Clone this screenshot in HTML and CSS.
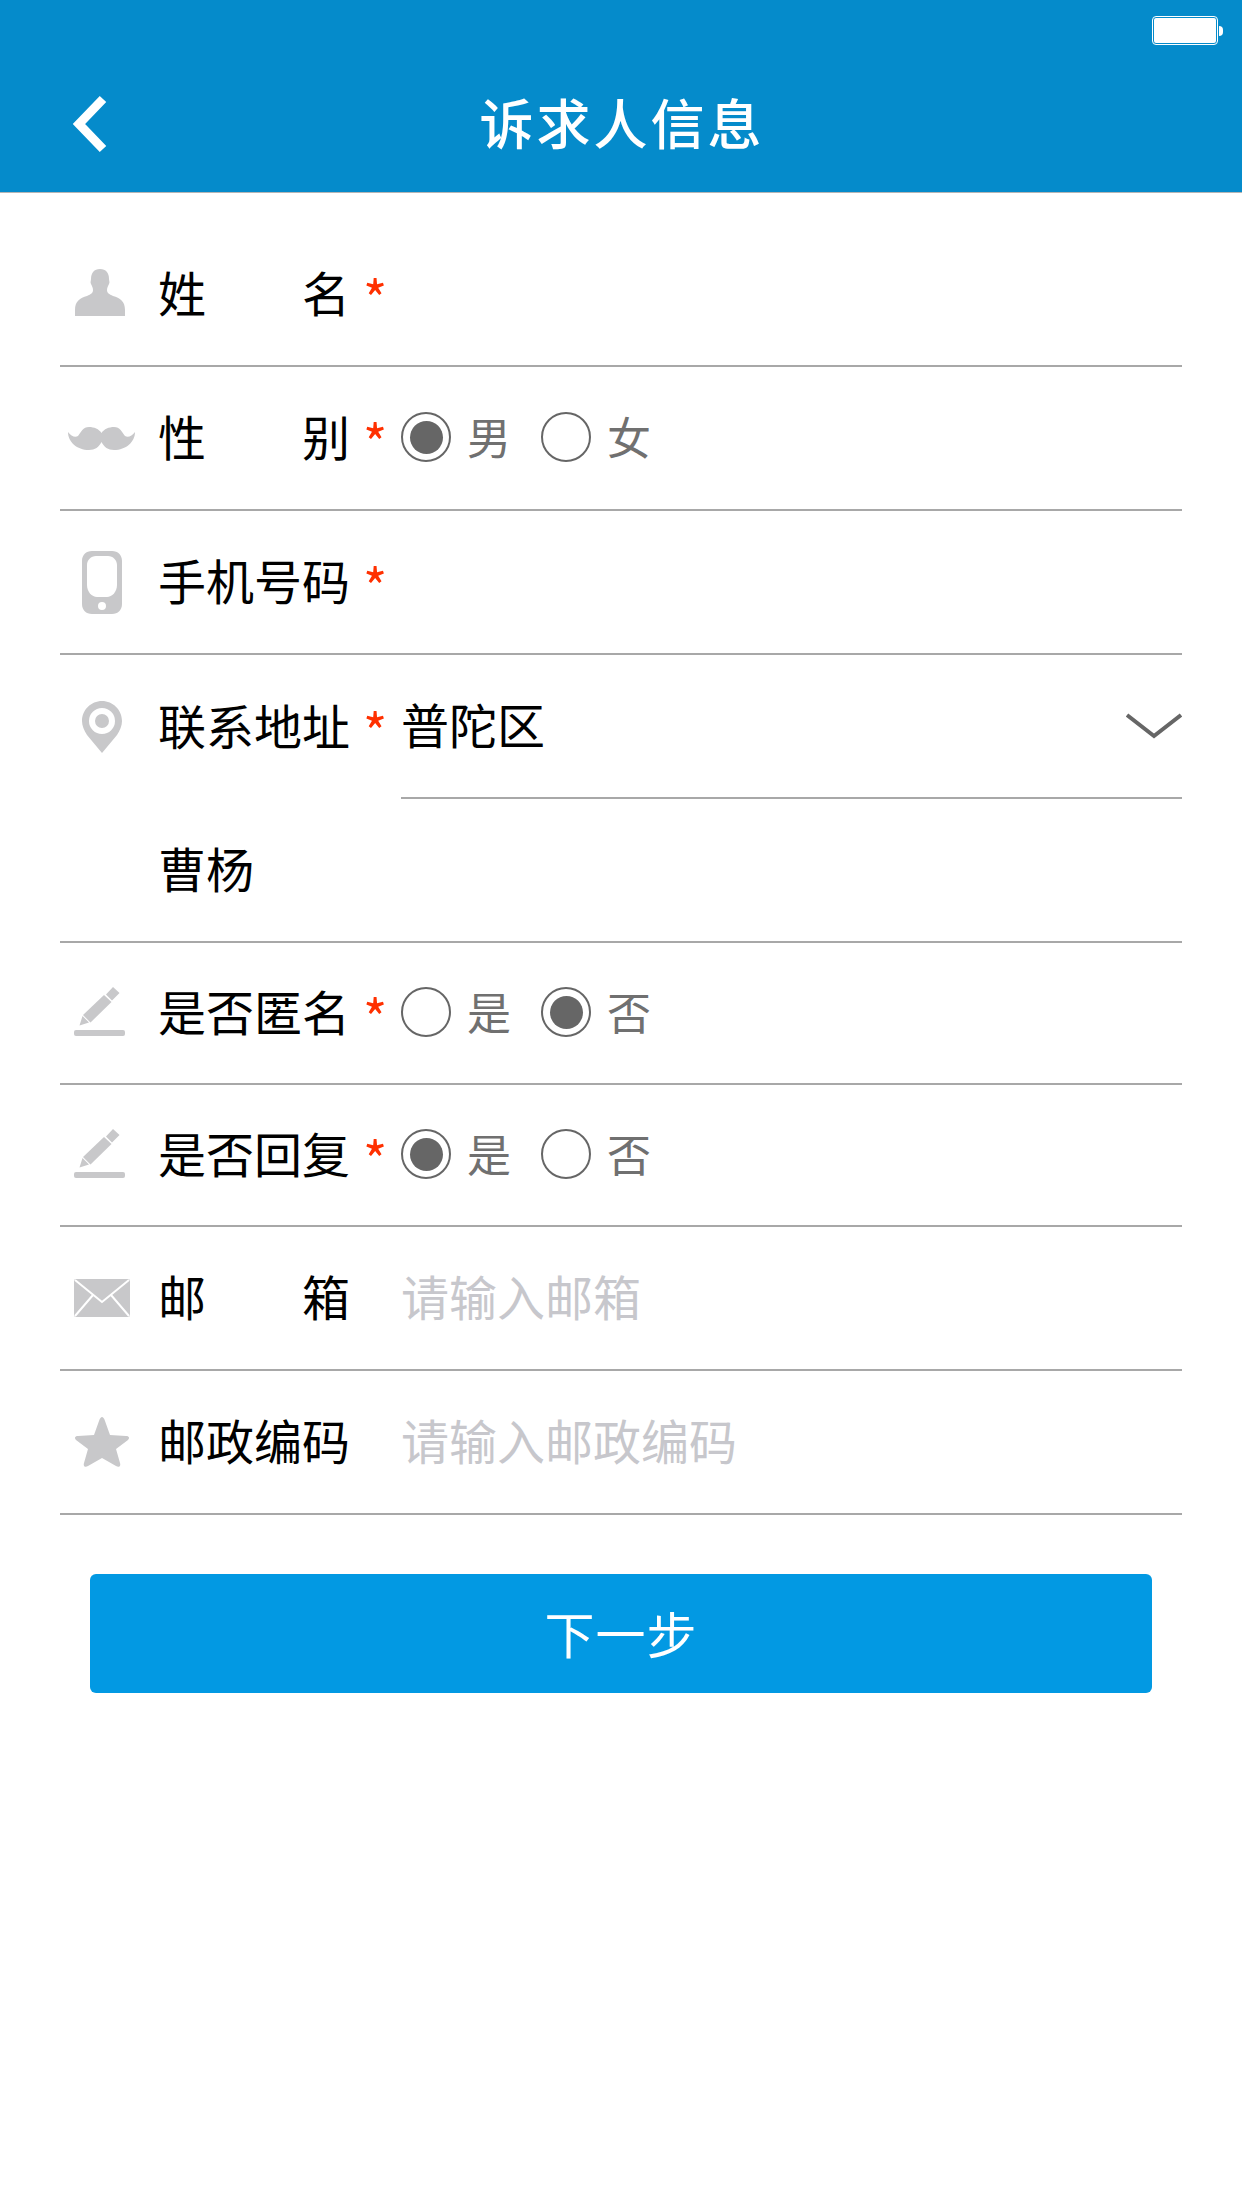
FILE: index.html
```html
<!DOCTYPE html>
<html lang="zh-CN">
<head>
    <meta charset="UTF-8">
    <meta name="viewport" content="width=device-width, initial-scale=1.0">
    <title>诉求人信息</title>
    <link rel="stylesheet" href="styles.css">
</head>
<body>
    <header class="topbar">
        <div class="statusbar">
            <span class="battery"></span>
            <span class="battery-tip"></span>
        </div>
        <div class="navbar">
            <svg class="back" width="36" height="58" viewBox="0 0 36 58"><path d="M31 4 L7 29 L31 54" fill="none" stroke="#fff" stroke-width="9"/></svg>
            <h1 class="title">诉求人信息</h1>
        </div>
    </header>

    <main class="form">
        <div class="row">
            <div class="icon icon-left">
                <svg width="50" height="47" viewBox="0 0 50 47"><path d="M25 0c6 0 9 4 9 10 0 2 1 3 0 5-1 2-2 4-2 6 0 3 2 4 6 6 7 2 12 5 12 14v6H0v-6c0-9 5-12 12-14 4-2 6-3 6-6 0-2-1-4-2-6-1-2 0-3 0-5 0-6 3-10 9-10z"/></svg>
            </div>
            <div class="label"><span>姓</span><span>名</span></div>
            <span class="star">*</span>
        </div>

        <div class="row">
            <div class="icon">
                <svg class="moustache" width="67" height="23" viewBox="0 0 67 23"><path d="M0 5C3 9 7 11 10 9 13 5 15 0 21 0 26 0 31 2 33.500 6 36 2 41 0 46 0 52 0 54 5 57 9 60 11 64 9 67 5 67 15 58 23 46 23 40 23 36 20 33.500 15 31 20 27 23 21 23 9 23 0 15 0 5z"/></svg>
            </div>
            <div class="label"><span>性</span><span>别</span></div>
            <span class="star">*</span>
            <div class="choices">
                <span class="radio radio-on"></span><span class="choice">男</span>
                <span class="radio"></span><span class="choice">女</span>
            </div>
        </div>

        <div class="row">
            <div class="icon">
                <svg width="40" height="63" viewBox="0 0 40 63"><path fill-rule="evenodd" d="M10 0h20c6 0 10 4 10 10v43c0 6-4 10-10 10H10C4 63 0 59 0 53V10C0 4 4 0 10 0zm4 5C9 5 5 9 5 14v20c0 7 5 12 10 12h10c5 0 10-5 10-12V14c0-5-4-9-9-9H14zm6 46a4 4 0 1 0 0 8 4 4 0 0 0 0-8z"/></svg>
            </div>
            <div class="label"><span>手机号码</span></div>
            <span class="star">*</span>
        </div>

        <div class="row row-address">
            <div class="icon">
                <svg width="40" height="52" viewBox="0 0 40 52"><path fill-rule="evenodd" d="M20 0c11 0 20 9 20 20 0 5-2 9-5 14L20 52 5 34C2 29 0 25 0 20 0 9 9 0 20 0zm0 7a13 13 0 1 0 0 26 13 13 0 0 0 0-26zm0 6a7 7 0 1 1 0 14 7 7 0 0 1 0-14z"/></svg>
            </div>
            <div class="label"><span>联系地址</span></div>
            <span class="star">*</span>
            <div class="select">
                <span class="value">普陀区</span>
                <svg width="56" height="26" viewBox="0 0 56 26"><path d="M1 2 L28 23 L55 2" fill="none" stroke="#666" stroke-width="4"/></svg>
            </div>
        </div>

        <div class="row row-detail">
            <span class="value">曹杨</span>
        </div>

        <div class="row row-short">
            <div class="icon icon-left">
                <svg width="51" height="49" viewBox="0 0 51 49"><path d="M39 0L45.500 6 38 13.500 32 7.500zM30 8L37.500 15 16.500 35.500 9 28zM5.500 38.500L8.500 29 15 35.500z"/><rect x="0" y="43" width="51" height="6" rx="2"/></svg>
            </div>
            <div class="label"><span>是否匿名</span></div>
            <span class="star">*</span>
            <div class="choices">
                <span class="radio"></span><span class="choice">是</span>
                <span class="radio radio-on"></span><span class="choice">否</span>
            </div>
        </div>

        <div class="row row-short">
            <div class="icon icon-left">
                <svg width="51" height="49" viewBox="0 0 51 49"><path d="M39 0L45.500 6 38 13.500 32 7.500zM30 8L37.500 15 16.500 35.500 9 28zM5.500 38.500L8.500 29 15 35.500z"/><rect x="0" y="43" width="51" height="6" rx="2"/></svg>
            </div>
            <div class="label"><span>是否回复</span></div>
            <span class="star">*</span>
            <div class="choices">
                <span class="radio radio-on"></span><span class="choice">是</span>
                <span class="radio"></span><span class="choice">否</span>
            </div>
        </div>

        <div class="row">
            <div class="icon">
                <svg width="56" height="38" viewBox="0 0 56 38"><rect width="56" height="38" rx="2"/><path d="M1 1L28 23 55 1M1 37L19 16M55 37L37 16" fill="none" stroke="#fff" stroke-width="2"/></svg>
            </div>
            <div class="label"><span>邮</span><span>箱</span></div>
            <span class="gap"></span>
            <span class="placeholder">请输入邮箱</span>
        </div>

        <div class="row">
            <div class="icon">
                <svg width="54" height="50" viewBox="0 0 54 50"><path d="M27 0c1 0 2 1 3 4l5 14 16 1c3 0 4 2 2 4L41 32l4 14c1 3-1 5-4 3L27 41 13 49c-3 2-5 0-4-3l4-14L1 23c-2-2-1-4 2-4l16-1 5-14c1-3 2-4 3-4z"/></svg>
            </div>
            <div class="label"><span>邮政编码</span></div>
            <span class="gap"></span>
            <span class="placeholder">请输入邮政编码</span>
        </div>

        <button class="next">下一步</button>
    </main>
</body>
</html>
```

FILE: styles.css
```css
body {
    margin: 0;
    background-color: #fff;
    font-family: "Noto Sans CJK SC", "Liberation Sans", sans-serif;
    color: #000;
}
.topbar {
    height: 192px;
    background-color: #058bcb;
    border-bottom: 1px solid #b5b5b5;
}
.statusbar {
    height: 62px;
    display: flex;
    align-items: flex-start;
    justify-content: flex-end;
    padding: 17px 19px 0 0;
    box-sizing: border-box;
}
.battery {
    width: 62px;
    height: 25px;
    background-color: #fff;
    border: 1px solid #058bcb;
    outline: 1px solid #fff;
    border-radius: 3px;
}
.battery-tip {
    width: 4px;
    height: 10px;
    margin: 9px 0 0 2px;
    background-color: #fff;
    border-radius: 0 4px 4px 0;
}
.navbar {
    position: relative;
    height: 130px;
    display: flex;
    align-items: center;
    justify-content: center;
}
.back {
    position: absolute;
    left: 72px;
    top: 33px;
}
.title {
    margin: 0 0 10px 2px;
    font-size: 54px;
    line-height: 70px;
    font-weight: 500;
    letter-spacing: 3px;
    color: #fff;
}
.form {
    padding: 30px 60px 0;
}
.row {
    height: 144px;
    box-sizing: border-box;
    display: flex;
    align-items: center;
    border-bottom: 2px solid #a8a8a8;
}
.row-short {
    height: 142px;
}
.row-address {
    align-items: stretch;
    border-bottom: none;
}
.row-address .icon,
.row-address .label,
.row-address .star {
    align-self: center;
}
.row-detail {
    padding-left: 98px;
}
.icon {
    width: 84px;
    margin-right: 14px;
    display: flex;
    justify-content: center;
    flex-shrink: 0;
}
.icon-left svg {
    margin: -4px 5px 0 0;
}
.moustache {
    margin-right: 2px;
}
.icon svg {
    fill: #c8c8ca;
}
.label {
    width: 192px;
    padding-bottom: 6px;
    display: flex;
    justify-content: space-between;
    font-size: 48px;
    line-height: 60px;
    white-space: nowrap;
}
.star {
    width: 51px;
    padding: 6px 0 0 13px;
    box-sizing: border-box;
    font-size: 52px;
    line-height: 60px;
    color: #ff3000;
}
.gap {
    width: 51px;
}
.choices {
    display: flex;
    align-items: center;
    margin-top: -2px;
}
.radio {
    width: 50px;
    height: 50px;
    box-sizing: border-box;
    border: 2px solid #666;
    border-radius: 50%;
    display: flex;
    align-items: center;
    justify-content: center;
}
.radio-on::after {
    content: "";
    width: 33px;
    height: 33px;
    border-radius: 50%;
    background-color: #666;
}
.choice {
    width: 90px;
    padding: 0 0 2px 16px;
    box-sizing: border-box;
    font-size: 44px;
    line-height: 60px;
    color: #707070;
}
.select {
    flex: 1;
    display: flex;
    align-items: center;
    justify-content: space-between;
    border-bottom: 2px solid #a8a8a8;
}
.value {
    font-size: 48px;
    line-height: 60px;
    padding-bottom: 6px;
}
.placeholder {
    font-size: 48px;
    line-height: 60px;
    padding-bottom: 6px;
    color: #c7c7cc;
}
.next {
    display: block;
    width: 1062px;
    height: 119px;
    margin: 59px 0 0 30px;
    border: none;
    border-radius: 6px;
    background-color: #0299e3;
    color: #fff;
    font-family: inherit;
    font-size: 50px;
    letter-spacing: 1px;
    padding-bottom: 4px;
}
```
